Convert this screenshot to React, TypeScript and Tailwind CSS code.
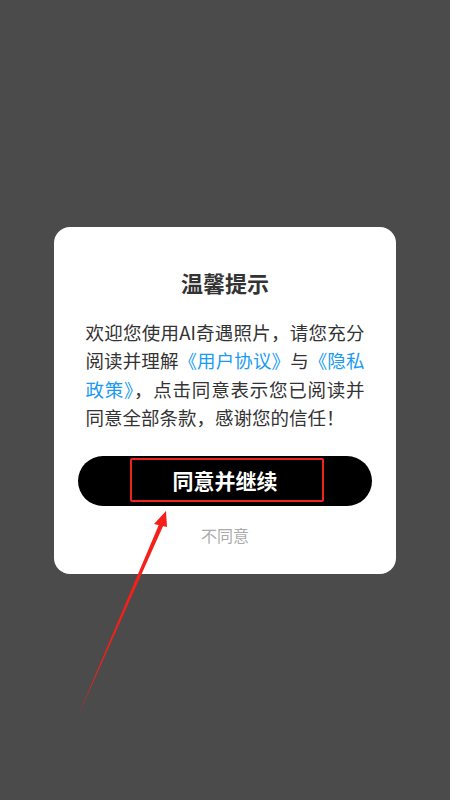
export default function App() {
  const font = { fontFamily: '"Noto Sans CJK SC", "Noto Sans", sans-serif' };

  return (
    <div
      className="relative w-[450px] h-[800px] bg-[#4b4b4b] flex flex-col items-center pt-[227px] overflow-hidden"
      style={font}
    >
      {/* Dialog */}
      <div className="w-[342px] bg-white rounded-[16px] pt-[40px] pb-[27px] flex flex-col items-center">
        <h2 className="text-[22px] leading-[30px] font-semibold text-[#333333]">温馨提示</h2>

        <div className="mt-[21px] w-[279px] text-[18.5px] leading-[28.4px] text-[#333333]">
          <div className="text-justify [text-align-last:justify]">欢迎您使用AI奇遇照片，请您充分</div>
          <div className="text-justify [text-align-last:justify]">
            阅读并理解<span className="text-[#1a9bf2]">《用户协议》</span>与<span className="text-[#1a9bf2]">《隐私</span>
          </div>
          <div className="text-justify [text-align-last:justify]">
            <span className="text-[#1a9bf2]">政策》</span>，点击同意表示您已阅读并
          </div>
          <div>同意全部条款，感谢您的信任！</div>
        </div>

        <button className="relative mt-[24px] w-[294px] h-[50px] rounded-full bg-black flex items-center justify-center">
          <span className="text-white text-[21px] font-semibold leading-none">同意并继续</span>
          {/* annotation box */}
          <span className="absolute left-[52px] top-[2px] w-[194px] h-[44px] border-2 border-[#f0231c] rounded-[2px]" />
        </button>

        <div className="mt-[17px] text-[16px] leading-[24px] text-[#ababab]">不同意</div>
      </div>

      {/* annotation arrow */}
      <svg className="absolute left-0 top-0 pointer-events-none" width="450" height="800" viewBox="0 0 450 800">
        <polygon points="78,716 160,522 164,524" fill="#f5201a" />
        <polygon points="166,511 154,524 167,527" fill="#f5201a" />
      </svg>
    </div>
  );
}
